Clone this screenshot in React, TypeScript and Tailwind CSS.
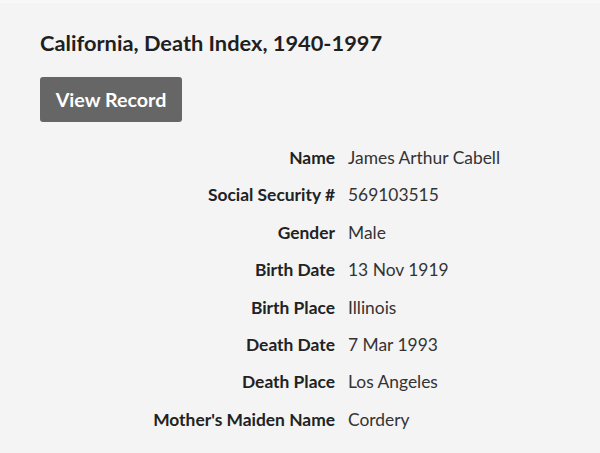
import React from "react";

const rows: [string, string][] = [
  ["Name", "James Arthur Cabell"],
  ["Social Security #", "569103515"],
  ["Gender", "Male"],
  ["Birth Date", "13 Nov 1919"],
  ["Birth Place", "Illinois"],
  ["Death Date", "7 Mar 1993"],
  ["Death Place", "Los Angeles"],
  ["Mother's Maiden Name", "Cordery"],
];

export default function App() {
  return (
    <div
      className="w-[600px] h-[453px] bg-[#f4f4f4] border-t-[3px] border-[#f8f8f8] px-[40px] pt-[26px]"
      style={{ fontFamily: "Lato, 'Open Sans', sans-serif" }}
    >
      <h1 className="text-[21.8px] leading-[28px] font-bold text-[#1f1f1f]">
        California, Death Index, 1940-1997
      </h1>
      <button className="mt-[20px] w-[142px] h-[45px] rounded-[3px] bg-[#666666] text-white text-[19.7px] font-bold">
        View Record
      </button>
      <div className="mt-[24px] grid grid-cols-[295px_1fr] gap-x-[13px] gap-y-[13.4px] text-[17.4px] leading-[24px]">
        {rows.map(([k, v]) => (
          <React.Fragment key={k}>
            <div className="text-right font-bold text-[#222]">{k}</div>
            <div className="text-[#333]">{v}</div>
          </React.Fragment>
        ))}
      </div>
    </div>
  );
}
